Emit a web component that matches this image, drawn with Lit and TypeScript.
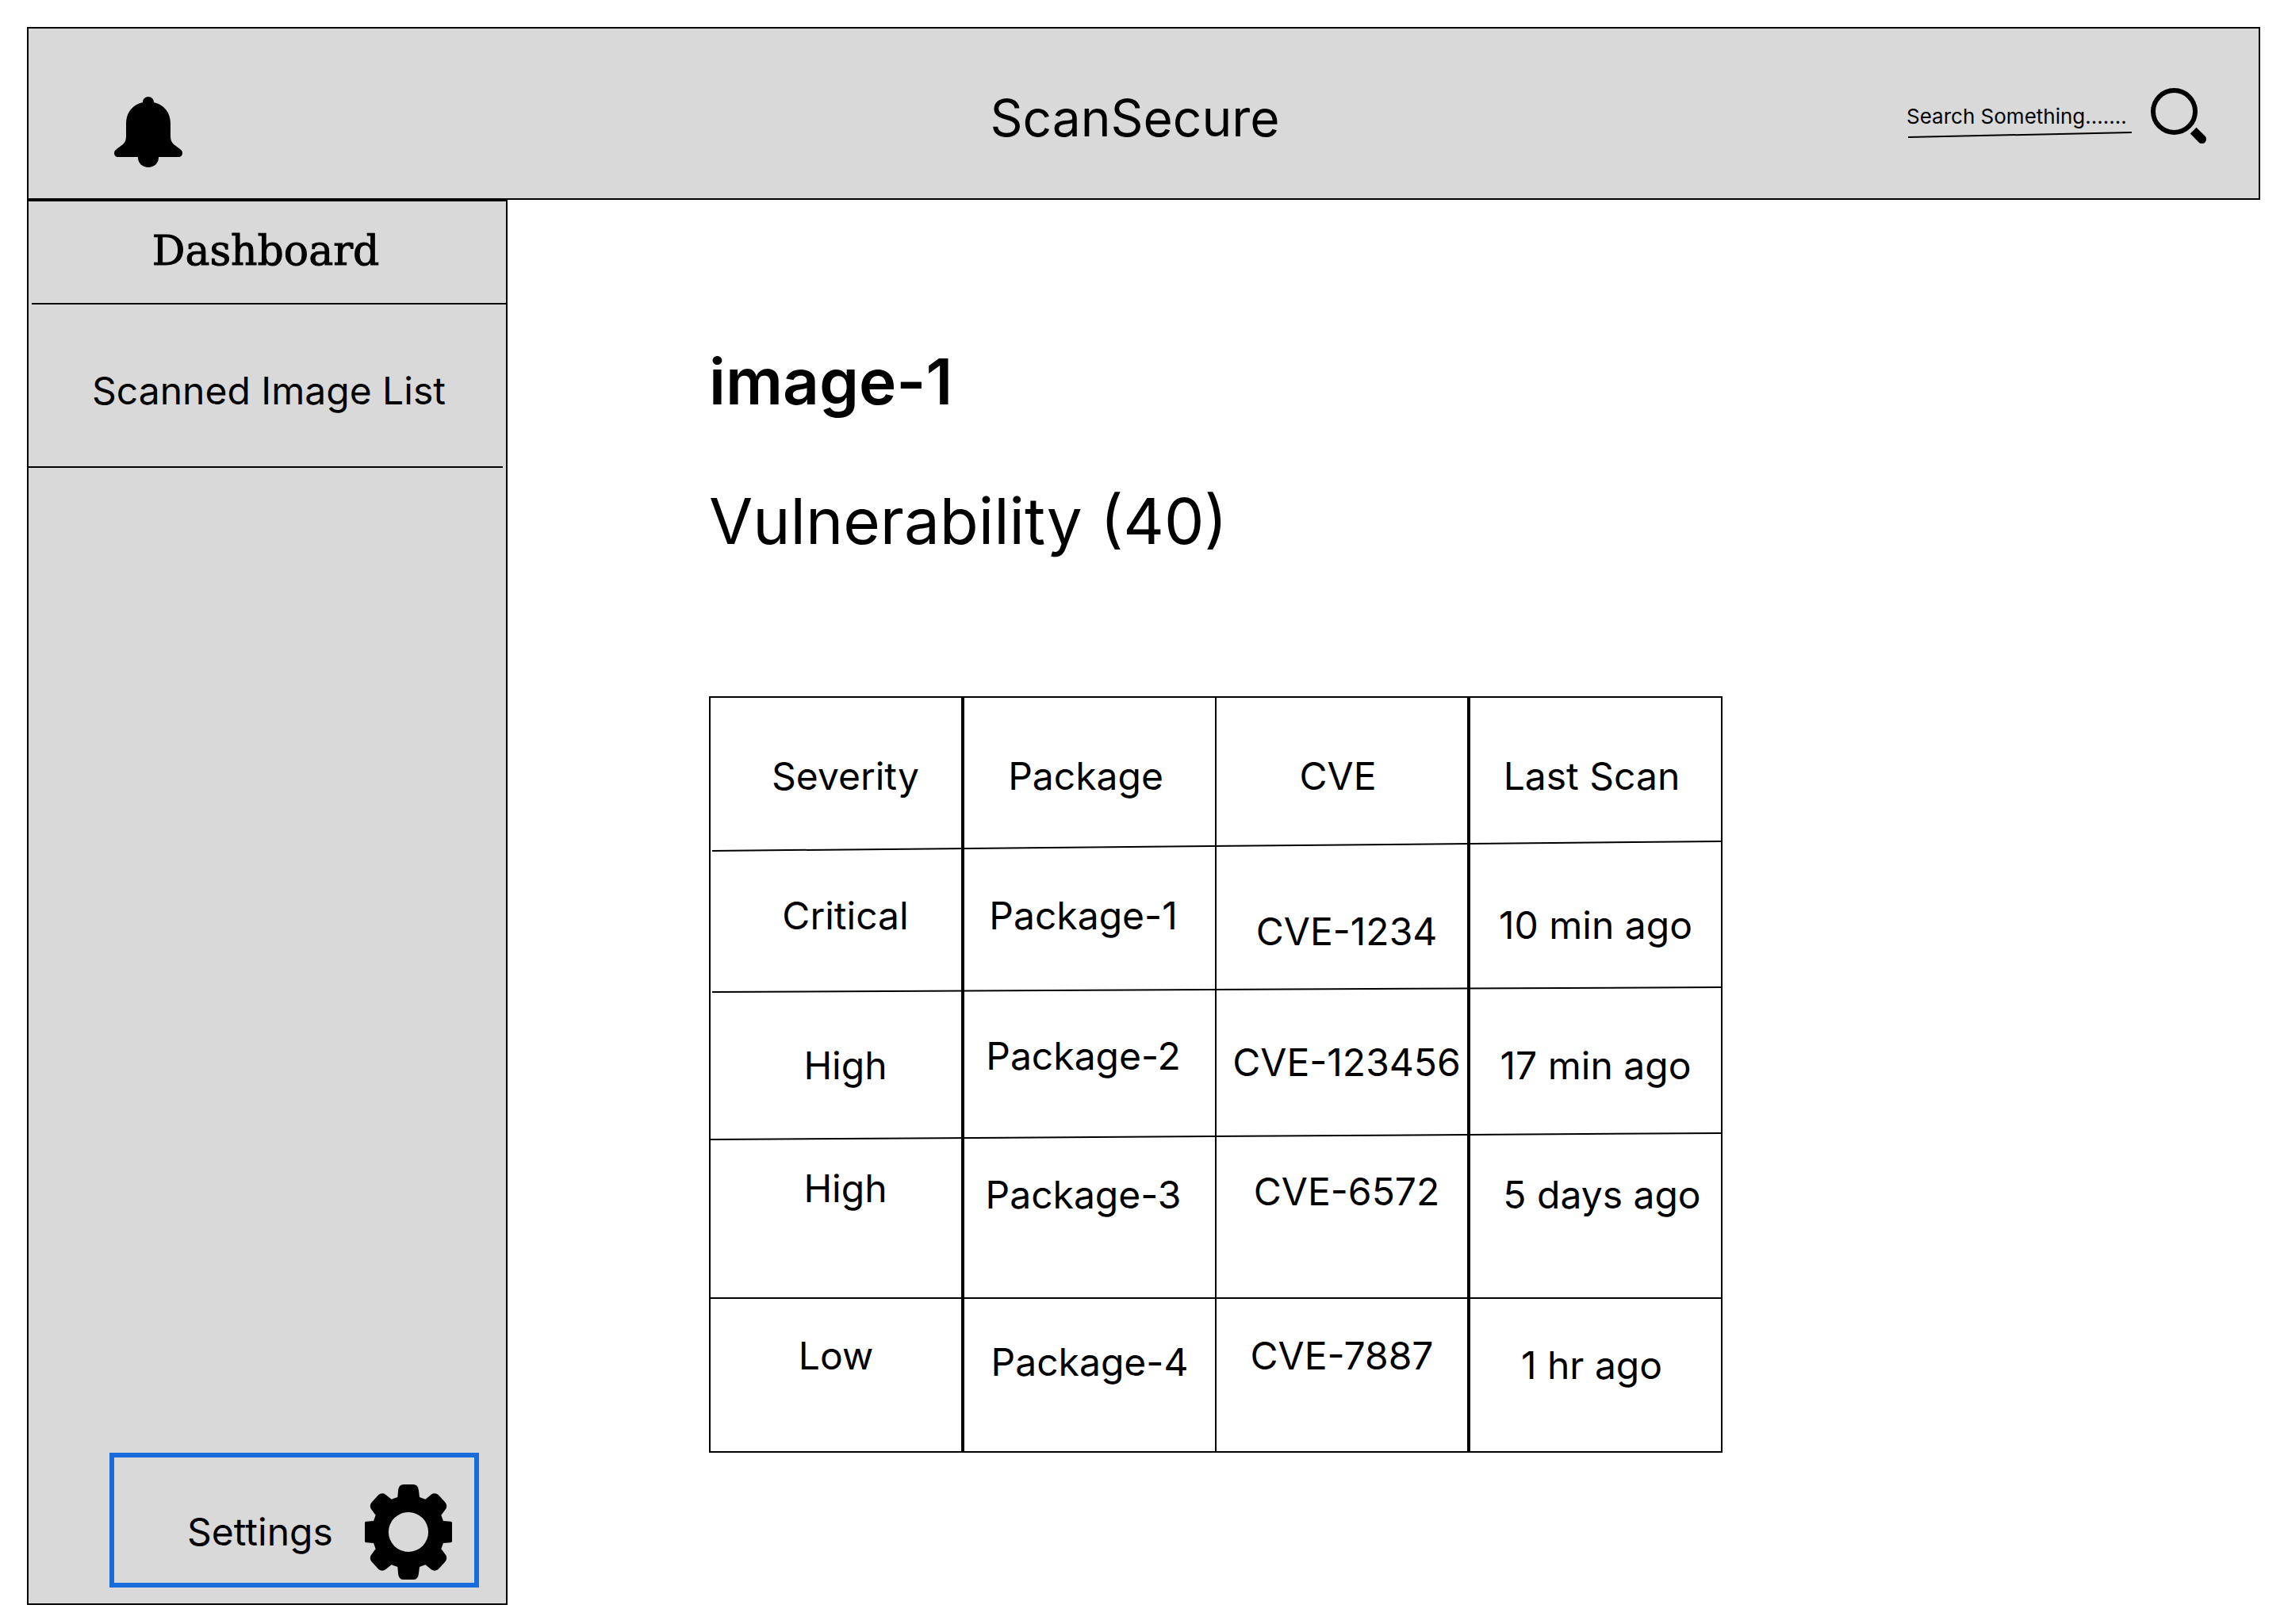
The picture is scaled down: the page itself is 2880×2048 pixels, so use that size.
import { LitElement, html, css, svg } from "lit";
import { customElement } from "lit/decorators.js";

type Cell = { text: string; place?: string };
type Row = { kind: string; cells: Cell[] };

const HEADINGS: Cell[] = [
  { text: "Severity", place: "right-l" },
  { text: "Package", place: "left-s" },
  { text: "CVE", place: "left-s" },
  { text: "Last Scan", place: "left-s" },
];

const ROWS: Row[] = [
  {
    kind: "row-1",
    cells: [
      { text: "Critical", place: "right-l" },
      { text: "Package-1", place: "left-m" },
      { text: "CVE-1234", place: "right-s drop-xl" },
      { text: "10 min ago", place: "drop-l" },
    ],
  },
  {
    kind: "row-2",
    cells: [
      { text: "High", place: "right-l drop-l" },
      { text: "Package-2", place: "left-m" },
      { text: "CVE-123456", place: "right-s drop-m" },
      { text: "17 min ago", place: "drop-l" },
    ],
  },
  {
    kind: "row-3",
    cells: [
      { text: "High", place: "right-l" },
      { text: "Package-3", place: "left-m drop-m" },
      { text: "CVE-6572", place: "right-s drop-s" },
      { text: "5 days ago", place: "right-m drop-m" },
    ],
  },
  {
    kind: "row-4",
    cells: [
      { text: "Low" },
      { text: "Package-4", place: "drop-m" },
      { text: "CVE-7887" },
      { text: "1 hr ago", place: "left-s drop-l" },
    ],
  },
];

const bell = svg`<svg class="bell" viewBox="0 0 86 89" aria-hidden="true">
  <path d="M36 7C36 3 39 0 43 0s7 3 7 7c13 3 21 13 21 27v16c0 4 1 7 4 10l8 6c2 1.500 3 3 3 5 0 3-2 5-5 5H56v1c0 7-6 12-13 12s-13-5-13-12v-1H5c-3 0-5-2-5-5 0-2 1-3.500 3-5l8-6c3-3 4-6 4-10V34C15 20 23 10 36 7z"/>
</svg>`;

const magnifier = svg`<svg class="magnifier" viewBox="0 0 70 70" aria-hidden="true">
  <circle cx="29.500" cy="29.500" r="26.500" fill="none" stroke="#000" stroke-width="6"/>
  <path d="M57.500 49.700L68.400 60.600A5.500 5.500 0 0 1 60.600 68.400L49.700 57.500z"/>
</svg>`;

const gear = svg`<svg class="gear" viewBox="0 0 298 360" preserveAspectRatio="none" aria-hidden="true">
  <path fill-rule="evenodd" d="M112 48L114 22Q116 0 133 0H165Q182 0 184 22L187 48L207 56L227 38Q239 29 251 39L275 68Q283 80 277 92L261 116L268 138L293 140Q298 141 298 143V217Q298 219 293 220L268 222L261 244L277 268Q283 280 275 292L251 321Q239 331 227 322L207 304L187 312L184 338Q182 360 165 360H133Q116 360 114 338L112 312L91 304L71 322Q59 331 47 321L23 292Q15 280 21 268L37 244L30 222L5 220Q0 219 0 217V143Q0 141 5 140L30 138L37 116L21 92Q15 80 23 68L47 39Q59 29 71 38L91 56ZM149 105A68 75 0 1 0 149 255A68 75 0 1 0 149 105Z"/>
</svg>`;

@customElement("app-root")
export class AppRoot extends LitElement {
  static styles = css`
    :host {
      display: block;
      color: #000;
      background: #fff;
      font-family: Inter, "Liberation Sans", sans-serif;
      font-size: 48px;
      line-height: 58px;
    }
    * {
      box-sizing: border-box;
    }
    .page {
      display: flex;
      flex-direction: column;
      min-height: 100vh;
      padding: 34px 30px 24px 34px;
    }
    .topbar {
      display: grid;
      grid-template-columns: 1fr auto 1fr;
      align-items: start;
      min-height: 218px;
      padding: 74px 66px 0 44px;
      border: 2px solid #000;
      background: #d9d9d9;
    }
    button {
      display: block;
      padding: 0;
      border: 0;
      background: none;
      color: inherit;
      font: inherit;
      cursor: pointer;
    }
    svg {
      display: block;
    }
    .alerts {
      margin: 12px 0 0 64px;
      justify-self: start;
    }
    .bell {
      width: 86px;
      height: 89px;
    }
    .brand {
      font-size: 64px;
      line-height: 78px;
    }
    .search {
      display: flex;
      align-items: flex-start;
      justify-self: end;
      gap: 24px;
      padding-top: 1px;
    }
    .field {
      width: 284px;
      padding-top: 20px;
    }
    .query {
      display: block;
      width: 100%;
      height: 32px;
      padding: 0;
      border: 0;
      outline: 0;
      background: none;
      color: #000;
      font: inherit;
      font-size: 26px;
      line-height: 32px;
    }
    .query::placeholder {
      color: #000;
      opacity: 1;
    }
    .underline {
      width: 100%;
      height: 10px;
      margin-top: 2px;
    }
    .magnifier {
      width: 70px;
      height: 70px;
    }
    .body {
      display: flex;
      flex: 1;
    }
    .sidebar {
      display: flex;
      flex-direction: column;
      flex: 0 0 606px;
      border: 2px solid #000;
      background: #d9d9d9;
      text-align: center;
    }
    .nav {
      display: flex;
      flex-direction: column;
      flex: 1;
    }
    .nav a {
      border-bottom: 2px solid #000;
      color: inherit;
      text-decoration: none;
    }
    .nav .dashboard {
      margin-left: 4px;
      padding: 32px 8px 36px 0;
      font-family: "DejaVu Serif", "Liberation Serif", serif;
      font-size: 52px;
      line-height: 60px;
      -webkit-text-stroke: 1px #000;
    }
    .nav .images {
      margin-right: 4px;
      padding: 80px 0 66px 8px;
    }
    .settings {
      display: flex;
      align-items: center;
      justify-content: space-between;
      margin: 0 34px 20px 102px;
      padding: 34px 28px 4px 92px;
      border: 6px solid #186cdb;
    }
    .gear {
      width: 110px;
      height: 120px;
    }
    .content {
      flex: 1;
      min-width: 0;
      padding: 180px 32px 0 254px;
    }
    h1,
    h2 {
      margin: 0;
      font-size: 80px;
      line-height: 97px;
    }
    h1 {
      font-weight: 600;
    }
    h2 {
      margin-top: 79px;
      font-weight: 400;
    }
    .report {
      position: relative;
      max-width: 1278px;
      margin-top: 173px;
    }
    .rules {
      position: absolute;
      inset: 2px;
      width: calc(100% - 4px);
      height: calc(100% - 4px);
      pointer-events: none;
    }
    table {
      width: 100%;
      table-layout: fixed;
      border: 2px solid #000;
      border-collapse: separate;
      border-spacing: 0;
      text-align: center;
    }
    .col-a {
      width: 316px;
    }
    .col-b {
      width: 320px;
    }
    .col-c {
      width: 318px;
    }
    th,
    td {
      padding: 0;
      border-left: 4px solid #000;
      font-weight: 400;
      vertical-align: top;
      white-space: nowrap;
    }
    th:first-child,
    td:first-child {
      border-left: 0;
    }
    th:nth-child(3),
    td:nth-child(3) {
      border-left-width: 2px;
    }
    .head {
      height: 186px;
    }
    .head th {
      padding-top: 70px;
    }
    .row-1 {
      height: 182px;
    }
    .row-1 td {
      padding-top: 60px;
    }
    .row-2 {
      height: 185px;
    }
    .row-2 td {
      padding-top: 55px;
    }
    .row-3 {
      height: 204px;
    }
    .row-3 td {
      padding-top: 37px;
    }
    .row-4 {
      height: 193px;
    }
    .row-4 td {
      padding-top: 44px;
    }
    .cell {
      display: block;
    }
    .right-s {
      padding-left: 12px;
    }
    .right-m {
      padding-left: 16px;
    }
    .right-l {
      padding-left: 24px;
    }
    .left-s {
      padding-right: 10px;
    }
    .left-m {
      padding-right: 16px;
    }
    .drop-s {
      padding-top: 4px;
    }
    .drop-m {
      padding-top: 8px;
    }
    .drop-l {
      padding-top: 12px;
    }
    .drop-xl {
      padding-top: 20px;
    }
  `;

  render() {
    return html`
      <div class="page">
        <header class="topbar">
          <button class="alerts" type="button" aria-label="Notifications">${bell}</button>
          <div class="brand">ScanSecure</div>
          <form class="search" role="search" @submit=${(e: Event) => e.preventDefault()}>
            <div class="field">
              <input class="query" type="text" aria-label="Search" placeholder="Search Something......." />
              <svg class="underline" viewBox="0 0 284 10" preserveAspectRatio="none" aria-hidden="true">
                <line x1="2" y1="8" x2="284" y2="2" stroke="#000" stroke-width="2" />
              </svg>
            </div>
            <button type="submit" aria-label="Run search">${magnifier}</button>
          </form>
        </header>
        <div class="body">
          <aside class="sidebar">
            <nav class="nav">
              <a class="dashboard" href="#dashboard">Dashboard</a>
              <a class="images" href="#images">Scanned Image List</a>
            </nav>
            <button class="settings" type="button"><span>Settings</span>${gear}</button>
          </aside>
          <main class="content">
            <h1>image-1</h1>
            <h2>Vulnerability (40)</h2>
            <div class="report">
              <table>
                <colgroup>
                  <col class="col-a" />
                  <col class="col-b" />
                  <col class="col-c" />
                  <col class="col-b" />
                </colgroup>
                <thead>
                  <tr class="head">
                    ${HEADINGS.map(
                      (c) => html`<th scope="col"><span class="cell ${c.place ?? ""}">${c.text}</span></th>`,
                    )}
                  </tr>
                </thead>
                <tbody>
                  ${ROWS.map(
                    (row) => html`<tr class=${row.kind}>
                      ${row.cells.map((c) => html`<td><span class="cell ${c.place ?? ""}">${c.text}</span></td>`)}
                    </tr>`,
                  )}
                </tbody>
              </table>
              <svg class="rules" viewBox="0 0 1274 950" preserveAspectRatio="none" aria-hidden="true">
                <g stroke="#000" stroke-width="2">
                  <line x1="2" y1="193" x2="1274" y2="181" />
                  <line x1="2" y1="371" x2="1274" y2="365" />
                  <line x1="0" y1="557" x2="1274" y2="549" />
                  <line x1="0" y1="757" x2="1274" y2="757" />
                </g>
              </svg>
            </div>
          </main>
        </div>
      </div>
    `;
  }
}
